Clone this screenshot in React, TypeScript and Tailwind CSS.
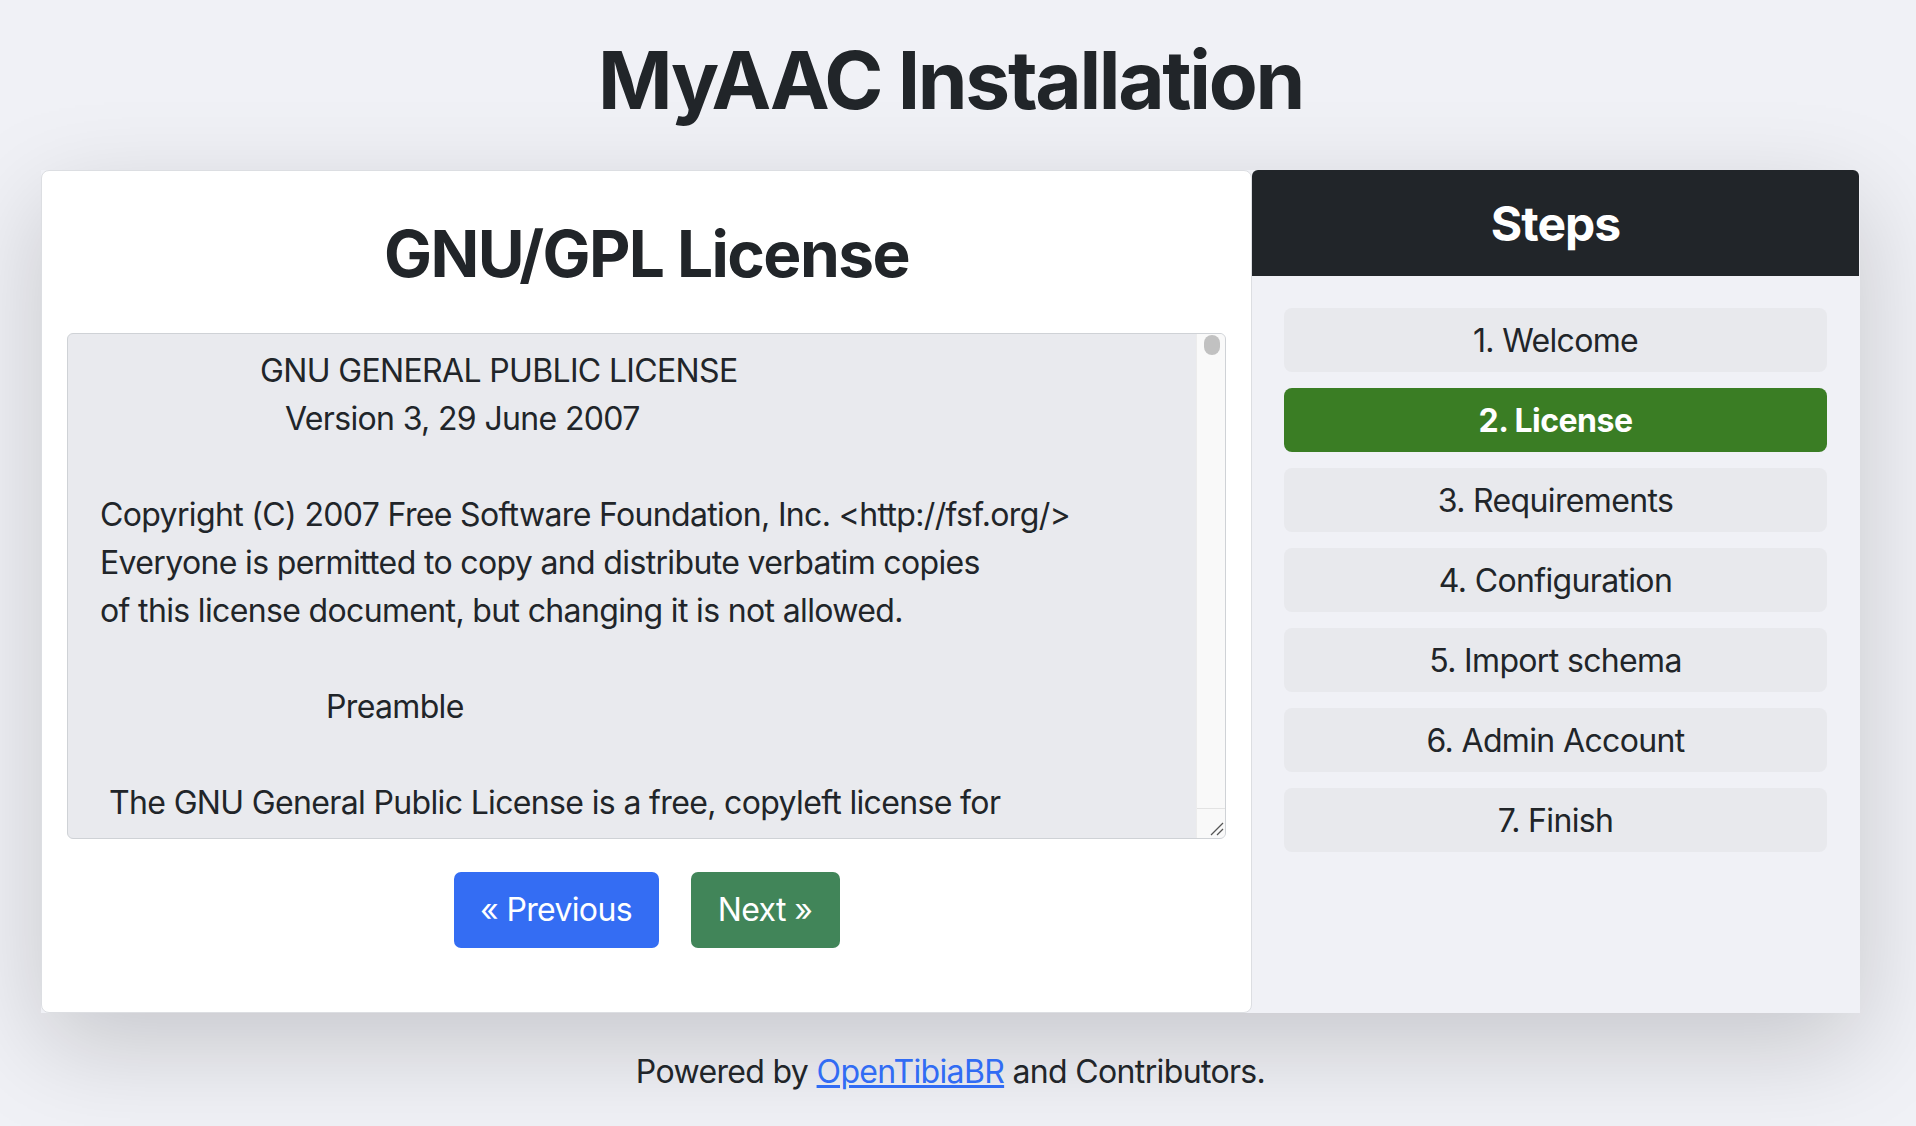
import React from "react";

const lines: { text: string; pl: string }[] = [
  { text: "GNU GENERAL PUBLIC LICENSE", pl: "pl-[192px]" },
  { text: "Version 3, 29 June 2007", pl: "pl-[217px]" },
  { text: "", pl: "" },
  { text: "Copyright (C) 2007 Free Software Foundation, Inc. <http://fsf.org/>", pl: "pl-[32px]" },
  { text: "Everyone is permitted to copy and distribute verbatim copies", pl: "pl-[32px]" },
  { text: "of this license document, but changing it is not allowed.", pl: "pl-[32px]" },
  { text: "", pl: "" },
  { text: "Preamble", pl: "pl-[258px]" },
  { text: "", pl: "" },
  { text: "The GNU General Public License is a free, copyleft license for", pl: "pl-[41px]" },
];

const steps = [
  "1. Welcome",
  "2. License",
  "3. Requirements",
  "4. Configuration",
  "5. Import schema",
  "6. Admin Account",
  "7. Finish",
];

export default function App() {
  return (
    <div
      className="min-h-screen w-full bg-[#f0f1f6] text-[#212529]"
      style={{ fontFamily: "Inter, 'Noto Sans', sans-serif" }}
    >
      <div className="w-[1901px] pb-[40px]">
        <h1 className="pt-[32px] text-center text-[80px] font-bold leading-[96px] tracking-[-2.3px]">
          MyAAC Installation
        </h1>

        <div className="mx-[41px] mt-[42px] flex shadow-[0_32px_96px_rgba(0,0,0,0.175)]">
          {/* Left card */}
          <div className="w-[1211px] rounded-[8px] border border-[#dcdee2] bg-white px-[25px] pb-[64px] pt-[44px]">
            <h2 className="text-center text-[64px] font-bold leading-[77px] tracking-[-1.6px]">
              GNU/GPL License
            </h2>
            <div className="mt-[41px] flex h-[506px] overflow-hidden rounded-[6px] border border-[#cfd2d6] bg-[#e9eaee]">
              <div className="flex-1 overflow-hidden pt-[13px] text-[32px] leading-[48px] tracking-[-0.65px] text-[#212529]">
                {lines.map((l, i) => (
                  <div key={i} className={`h-[48px] whitespace-pre ${l.pl}`}>
                    {l.text}
                  </div>
                ))}
              </div>
              <div className="flex w-[29px] flex-col border-l border-[#ececec] bg-[#f9f9f9]">
                <div className="flex flex-1 justify-center pt-[1px]">
                  <div className="ml-[1px] h-[20px] w-[16px] rounded-full bg-[#c1c1c1]" />
                </div>
                <div className="h-[30px] border-t border-[#e3e3e3]">
                  <svg width="28" height="29" viewBox="0 0 28 29">
                    <line x1="14" y1="26" x2="26" y2="14" stroke="#555" strokeWidth="1.3" />
                    <line x1="20" y1="26" x2="26" y2="20" stroke="#555" strokeWidth="1.3" />
                  </svg>
                </div>
              </div>
            </div>
            <div className="mt-[33px] flex justify-center gap-[32px]">
              <button className="h-[76px] w-[205px] rounded-[7px] bg-[#346df3] text-[32px] leading-[48px] tracking-[-0.65px] text-white">
                « Previous
              </button>
              <button className="h-[76px] w-[149px] rounded-[7px] bg-[#418559] text-[32px] leading-[48px] tracking-[-0.65px] text-white">
                Next »
              </button>
            </div>
          </div>

          {/* Steps panel */}
          <div className="flex w-[607px] flex-col rounded-tr-[8px] bg-[#f0f1f6]">
            <div className="h-[106px] rounded-t-[6px] bg-[#212529] pt-[25px] text-center text-[48px] font-bold leading-[58px] tracking-[-1px] text-white">
              Steps
            </div>
            <div className="flex flex-col gap-[16px] px-[32px] pt-[32px]">
              {steps.map((s, i) =>
                i === 1 ? (
                  <div
                    key={s}
                    className="rounded-[8px] bg-[#3a7d24] pb-[7px] pt-[9px] text-center text-[32px] font-bold leading-[48px] tracking-[-0.5px] text-white"
                  >
                    {s}
                  </div>
                ) : (
                  <div
                    key={s}
                    className="rounded-[8px] bg-[#e8e9ed] pb-[7px] pt-[9px] text-center text-[32px] leading-[48px] tracking-[-0.65px] text-[#212529]"
                  >
                    {s}
                  </div>
                )
              )}
            </div>
          </div>
        </div>

        <p className="mt-[35px] text-center text-[32px] leading-[48px] tracking-[-0.65px]">
          Powered by{" "}
          <a href="#" className="text-[#316cf4] underline">
            OpenTibiaBR
          </a>{" "}
          and Contributors.
        </p>
      </div>
    </div>
  );
}
